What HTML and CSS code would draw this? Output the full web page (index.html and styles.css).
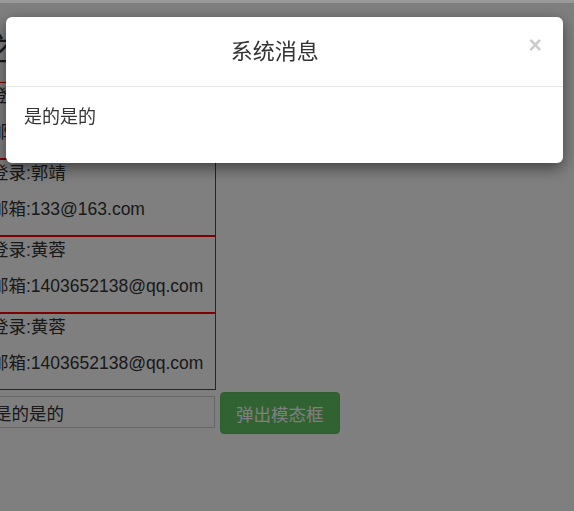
FILE: index.html
```html
<!DOCTYPE html>
<html lang="zh-CN">
<head>
    <meta charset="UTF-8">
    <meta name="viewport" content="width=device-width, initial-scale=1.0">
    <title>用户列表</title>
    <link rel="stylesheet" href="styles.css">
</head>
<body>
    <div class="page">
        <h2 class="page-title">用户列表之</h2>

        <div class="user-list">
            <div class="user-item">
                <p>登录:张三</p>
                <p>邮箱:123@163.com</p>
            </div>
            <div class="user-item">
                <p>登录:郭靖</p>
                <p>邮箱:133@163.com</p>
            </div>
            <div class="user-item">
                <p>登录:黄蓉</p>
                <p>邮箱:1403652138@qq.com</p>
            </div>
            <div class="user-item">
                <p>登录:黄蓉</p>
                <p>邮箱:1403652138@qq.com</p>
            </div>
        </div>

        <div class="form-row">
            <input type="text" class="msg-input" value="是的是的">
            <button class="btn-success">弹出模态框</button>
        </div>
    </div>

    <!-- Modal -->
    <div class="top-strip"></div>
    <div class="modal-backdrop"></div>
    <div class="modal">
        <div class="modal-content">
            <div class="modal-header">
                <h4 class="modal-title">系统消息</h4>
                <button class="close">&times;</button>
            </div>
            <div class="modal-body">是的是的</div>
        </div>
    </div>
</body>
</html>
```

FILE: styles.css
```css
* {
    box-sizing: border-box;
}

body {
    margin: 0;
    background-color: #fff;
    color: #333;
    font-family: "Liberation Sans", Arial, "Noto Sans CJK SC", sans-serif;
    font-size: 17.5px;
    overflow: hidden;
}

.page {
    margin-left: -22px;
}

.page-title {
    margin: 32px 0 15px -130px;
    padding-left: 8px;
    font-size: 32px;
    font-weight: normal;
    line-height: 35px;
    white-space: nowrap;
}

/* User list */
.user-list {
    width: 238px;
}

.user-item {
    border: 1px solid red;
    padding: 0 0 3px 12px;
}

.user-item p {
    margin: 0 0 10px;
    line-height: 26px;
    white-space: nowrap;
}

/* Form */
.form-row {
    display: flex;
    align-items: flex-start;
    gap: 5px;
}

.msg-input {
    width: 237px;
    height: 32px;
    margin-top: 6px;
    padding: 0 0 0 15px;
    border: 1px solid #ccc;
    font: inherit;
    color: #333;
}

.btn-success {
    height: 42px;
    margin-top: 2px;
    padding: 0 15px;
    border: 1px solid #5bbd5b;
    border-radius: 4px;
    background-color: #62c462;
    color: #fff;
    font: inherit;
}

/* Modal */
.top-strip {
    position: fixed;
    top: 0;
    left: 0;
    right: 0;
    height: 3px;
    background-color: #999;
    z-index: 1060;
}

.modal-backdrop {
    position: fixed;
    inset: 0;
    background-color: rgba(0, 0, 0, 0.5);
    z-index: 1040;
}

.modal {
    position: fixed;
    top: 17px;
    left: 6px;
    width: 557px;
    z-index: 1050;
}

.modal-content {
    background-color: #fff;
    border-radius: 6px;
    box-shadow: 0 5px 15px rgba(0, 0, 0, 0.5);
}

.modal-header {
    display: flex;
    align-items: center;
    height: 70px;
    padding: 0 21px 0 15px;
    border-bottom: 1px solid #e5e5e5;
}

.modal-title {
    flex: 1;
    margin: 0;
    font-size: 22px;
    font-weight: normal;
    line-height: 30px;
    text-align: center;
    color: #333;
}

.close {
    align-self: flex-start;
    margin-top: 17px;
    padding: 0;
    border: 0;
    background: none;
    font-family: "Liberation Sans", Arial, sans-serif;
    font-size: 23px;
    font-weight: bold;
    line-height: 1;
    color: #000;
    opacity: 0.2;
}

.modal-body {
    padding: 19px 18px 35px;
    font-size: 18px;
    line-height: 22px;
    color: #333;
}
```
